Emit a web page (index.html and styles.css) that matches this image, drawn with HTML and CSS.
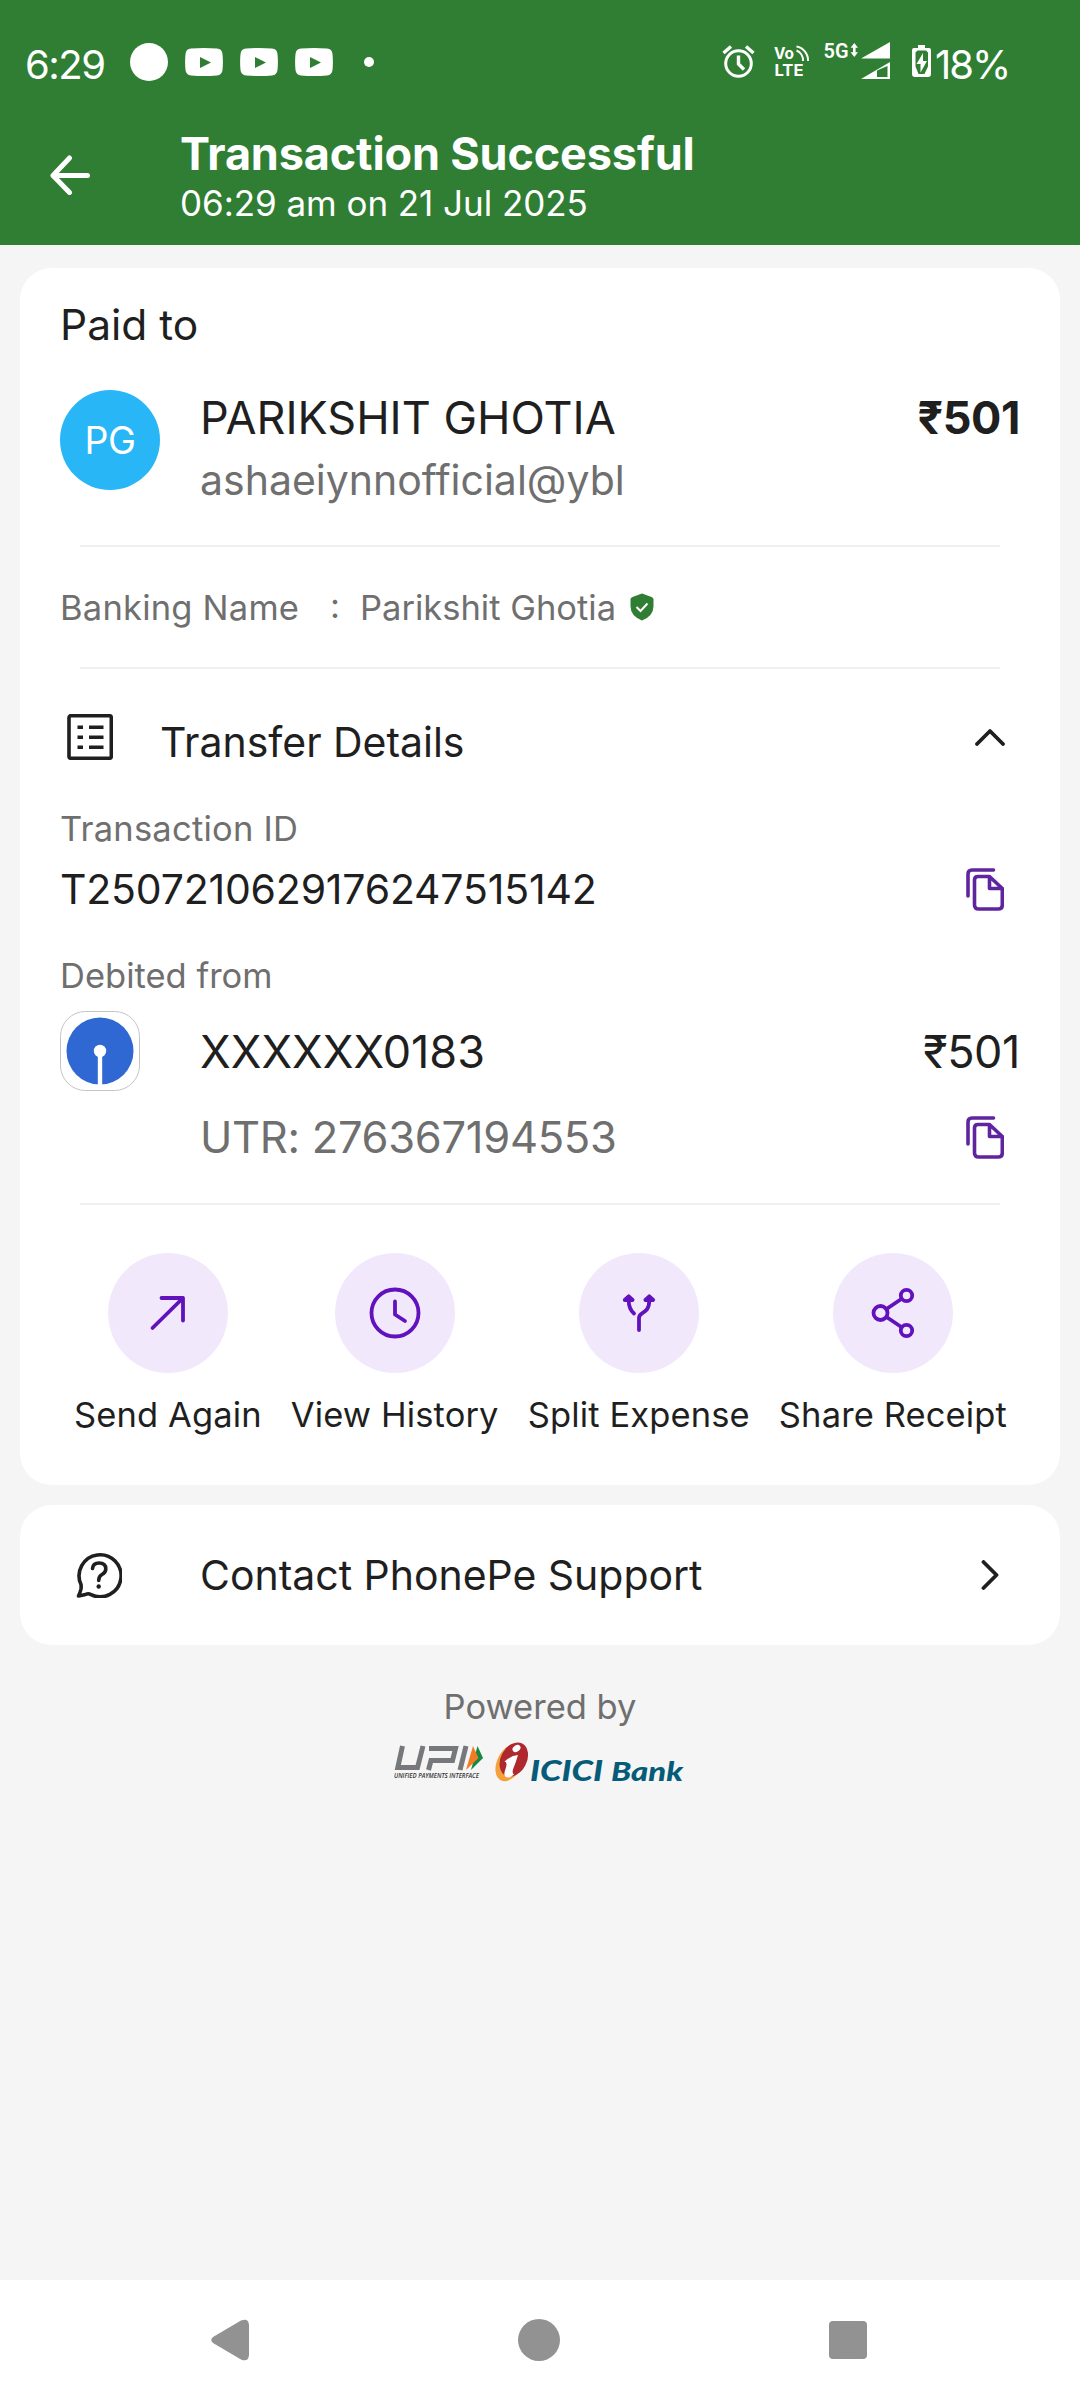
FILE: index.html
```html
<!DOCTYPE html>
<html lang="en">
<head>
<meta charset="utf-8">
<title>Transaction Successful</title>
<link rel="stylesheet" href="styles.css">
</head>
<body>
<header class="top">
  <div class="status">
    <span class="clock">6:29</span>
    <div class="notifications">
      <span class="disc"></span>
      <svg class="video" viewBox="0 0 38 28"><path d="M6 .6Q19-.6 32 .6Q37 1 37.500 6Q38.300 14 37.500 22Q37 27 32 27.400Q19 28.600 6 27.400Q1 27 .5 22Q-.3 14 .5 6Q1 1 6 .6ZM15 9V20L26 14.500Z"/></svg>
      <svg class="video" viewBox="0 0 38 28"><path d="M6 .6Q19-.6 32 .6Q37 1 37.500 6Q38.300 14 37.500 22Q37 27 32 27.400Q19 28.600 6 27.400Q1 27 .5 22Q-.3 14 .5 6Q1 1 6 .6ZM15 9V20L26 14.500Z"/></svg>
      <svg class="video" viewBox="0 0 38 28"><path d="M6 .6Q19-.6 32 .6Q37 1 37.500 6Q38.300 14 37.500 22Q37 27 32 27.400Q19 28.600 6 27.400Q1 27 .5 22Q-.3 14 .5 6Q1 1 6 .6ZM15 9V20L26 14.500Z"/></svg>
    </div>
    <span class="dot"></span>
    <svg class="system" viewBox="0 0 212 44">
      <g fill="none" stroke="#fff" stroke-width="3">
        <circle cx="16.500" cy="23.500" r="12.800"/>
        <path d="M16.500 15.500V24L22 29.500M1.500 13L9 6.500M31.500 13L24 6.500" stroke-width="3.400"/>
        <path d="M74.500 10.500A10.500 10.500 0 0 1 81 21M74.500 6.500A14 14 0 0 1 86 21" stroke-width="2"/>
      </g>
      <g fill="#fff">
        <text class="vo" x="52" y="18.500" textLength="20" lengthAdjust="spacingAndGlyphs">Vo</text>
        <text class="vo" x="52.500" y="36" textLength="29" lengthAdjust="spacingAndGlyphs">LTE</text>
        <text class="net" x="101.500" y="17.500" textLength="25" lengthAdjust="spacingAndGlyphs">5G</text>
        <path d="M132.300 3L136 7.800H133.600V12.200H136L132.300 17L128.600 12.200H131V7.800H128.600Z"/>
        <path d="M139 18.500L168 2V18.500ZM139 39L168 22V39ZM155 30.500V37H165.500V26Z" fill-rule="evenodd"/>
        <path d="M196 5H203V8H207Q209 8 209 10V34Q209 37 206 37H193Q190 37 190 34V10Q190 8 192 8H196ZM193.500 12.500V26.500L196.500 34H202.500L206 26.500V12.500L204 10.500H195.500Z" fill-rule="evenodd"/>
        <path d="M201 13L194.500 24H198.500V32.500L205 21H201Z"/>
      </g>
    </svg>
    <span class="battery">18%</span>
  </div>
  <div class="titlebar">
    <svg class="back" viewBox="0 0 40 40"><path d="M37.500 20.500H3L19.500 3M3 20.500L19.500 37.500"/></svg>
    <div class="heading">
      <h1 class="title">Transaction Successful</h1>
      <div class="when">06:29 am on 21 Jul 2025</div>
    </div>
  </div>
</header>

<main class="content">
  <section class="card receipt">
    <div class="paid">Paid to</div>
    <div class="payee">
      <div class="avatar"><span class="initials">PG</span></div>
      <div class="who">
        <div class="name-line"><span class="name">PARIKSHIT GHOTIA</span><span class="amount strong">₹501</span></div>
        <div class="vpa-line"><span class="vpa">ashaeiynnofficial@ybl</span></div>
      </div>
    </div>
    <div class="rule first"></div>
    <div class="banking">
      <span class="small wide bank-label">Banking Name</span>
      <span class="small colon">:</span>
      <span class="small bank-value">Parikshit Ghotia</span>
      <svg class="shield" viewBox="0 0 24 28"><path class="shield-body" d="M12 .5L21.500 4Q23.500 4.800 23.500 6.500V13Q23.500 23 12 27.500Q.5 23 .5 13V6.500Q.5 4.800 2.500 4Z"/><path class="shield-tick" d="M6.500 14L10.500 18L17.500 10.500"/></svg>
    </div>
    <div class="rule"></div>
    <div class="details-head">
      <svg class="list" viewBox="0 0 46 46"><rect x="2" y="1.700" width="42.300" height="42.600" rx="2"/><path d="M10.500 13.200H16M10.500 23.200H16M10.500 33.200H16M22 13.200H36.500M22 23.200H36.500M22 33.200H36.500"/></svg>
      <span class="medium details-title">Transfer Details</span>
      <svg class="chev-up" viewBox="0 0 30 18"><path d="M2 16L15 3L28 16"/></svg>
    </div>
    <div class="label txn-label"><span class="small wide">Transaction ID</span></div>
    <div class="row txn-row">
      <span class="medium txn-id">T2507210629176247515142</span>
      <svg class="copy" viewBox="0 0 38 43"><path d="M2 28V6Q2 2 6 2H27.500M12 8.500H23.500L36.300 20.500V37Q36.300 41 32.300 41H12.500Q8.500 41 8.500 37V12Q8.500 8.500 12 8.500ZM23.500 8.500V20.500H36.300"/></svg>
    </div>
    <div class="label debit-label"><span class="small">Debited from</span></div>
    <div class="row account">
      <svg class="bank" viewBox="0 0 80 80"><rect class="bank-frame" x=".5" y=".5" width="79" height="79" rx="25"/><circle class="bank-disc" cx="40" cy="40" r="33.500"/><circle cx="40" cy="40" r="6.200" fill="#fff"/><path d="M40 40V75" stroke="#fff" stroke-width="4.400"/></svg>
      <span class="acct">XXXXXX0183</span>
      <span class="amount">₹501</span>
    </div>
    <div class="row utr-row">
      <span class="utr">UTR: 276367194553</span>
      <svg class="copy" viewBox="0 0 38 43"><path d="M2 28V6Q2 2 6 2H27.500M12 8.500H23.500L36.300 20.500V37Q36.300 41 32.300 41H12.500Q8.500 41 8.500 37V12Q8.500 8.500 12 8.500ZM23.500 8.500V20.500H36.300"/></svg>
    </div>
    <div class="rule last"></div>
    <div class="actions">
      <div class="action">
        <svg class="bubble" viewBox="0 0 120 120"><path d="M44.500 75L75 45M53.500 45H75V67.500"/></svg>
        <span class="action-label">Send Again</span>
      </div>
      <div class="action">
        <svg class="bubble" viewBox="0 0 120 120"><circle cx="60" cy="60" r="23.500"/><path d="M60 48.500V61.500L70 68"/></svg>
        <span class="action-label">View History</span>
      </div>
      <div class="action">
        <svg class="bubble" viewBox="0 0 120 120"><path d="M60 77V65C60 58 70.300 62 70.300 47M55 60.500Q49.700 56 49.700 47"/><path class="solid" d="M70.300 43.300L74.200 47H66.400ZM49.700 43.300L53.600 47H45.800Z"/></svg>
        <span class="action-label">Split Expense</span>
      </div>
      <div class="action">
        <svg class="bubble" viewBox="0 0 120 120"><circle cx="47.500" cy="60" r="7"/><circle cx="73.500" cy="42.500" r="5.700"/><circle cx="73.500" cy="77.500" r="5.700"/><path d="M53.500 56L68.700 45.700M53.500 64L68.700 74.300"/></svg>
        <span class="action-label">Share Receipt</span>
      </div>
    </div>
  </section>

  <section class="card support">
    <svg class="help" viewBox="0 0 46 46"><path d="M5 32.500A21 21 0 1 1 15 42.700Q12.500 41 9.500 42.500L2.500 44Q4.500 39.500 5 37Q5.300 34.500 5 32.500Z"/><path d="M16.500 16.500Q17 11 23 11Q29.800 11 29.800 17Q29.800 20.500 26 22.500Q22.700 24.300 22.700 28.500"/><circle class="point" cx="22.700" cy="34.500" r="2.200"/></svg>
    <span class="medium support-text">Contact PhonePe Support</span>
    <svg class="chev-right" viewBox="0 0 18 30"><path d="M2.500 2L15.500 15L2.500 28"/></svg>
  </section>

  <div class="powered">
    <span class="small">Powered by</span>
    <svg class="logos" viewBox="0 0 292 44">
      <g fill="none" stroke="#77787b" stroke-width="5">
        <path d="M8.500 6L3.800 27.500H23.500L29 6"/>
        <path d="M35 8.500H61.500L58.500 20.500H37L34.500 30"/>
        <path d="M72 6L66 30"/>
      </g>
      <path d="M83.500 6L89 18L77 30Z" fill="#128a41"/>
      <path d="M79 6L84.500 18L72 30Z" fill="#f47a24"/>
      <text class="upi-sub" x="0" y="38" textLength="85" lengthAdjust="spacingAndGlyphs">UNIFIED PAYMENTS INTERFACE</text>
      <ellipse cx="115.800" cy="22.500" rx="12.500" ry="20" transform="rotate(27 115.800 22.500)" fill="#f6a03a"/>
      <ellipse cx="119.800" cy="19.500" rx="13" ry="18" transform="rotate(28 119.800 19.500)" fill="#ae282e"/>
      <ellipse cx="122.500" cy="8.500" rx="4.300" ry="3.200" transform="rotate(-35 122.500 8.500)" fill="#fff"/>
      <path d="M110.500 21.500Q117 15.500 124 15Q122 22 119.500 28Q117.500 33 120 34.500Q116 38.500 112 37Q109 35.500 111.500 29Q114 22 110.500 21.500Z" fill="#fff"/>
      <text class="icici" x="136" y="41" textLength="73" lengthAdjust="spacingAndGlyphs">ICICI</text>
      <text class="icici bank-word" x="217" y="41" textLength="72" lengthAdjust="spacingAndGlyphs">Bank</text>
    </svg>
  </div>
</main>

<nav class="nav">
  <svg class="nav-back" viewBox="0 0 38 42"><path d="M2 18L30 1.500Q37.500-1.500 38 6V36Q37.500 43.500 30 40.500L2 24Q-1.500 21 2 18Z"/></svg>
  <span class="nav-home"></span>
  <span class="nav-recent"></span>
</nav>
</body>
</html>
```
FILE: styles.css
```css
* { box-sizing: border-box; }
body {
  margin: 0;
  height: 2400px;
  display: flex;
  flex-direction: column;
  background: #f5f5f5;
  color: #1f1f1f;
  font-family: Inter, "Noto Sans", sans-serif;
  font-size: 34px;
}
svg { display: block; flex: none; }
span { white-space: nowrap; }

/* Header */
.top { height: 245px; background: #2f7e33; color: #fff; }
.status { display: flex; align-items: center; height: 124px; padding-left: 25px; }
.clock, .battery { font-size: 40px; line-height: 40px; padding-top: 5px; }
.clock { width: 105px; letter-spacing: -1.500px; }
.notifications { display: flex; align-items: center; gap: 17px; }
.disc { width: 38px; height: 38px; border-radius: 50%; background: #fff; }
.video { width: 38px; height: 28px; fill: #fff; fill-rule: evenodd; }
.dot { width: 10px; height: 10px; margin-left: 31px; border-radius: 50%; background: #fff; }
.system { width: 212px; height: 44px; margin-left: 348px; }
.vo { font: 700 16px Inter, sans-serif; }
.net { font: 600 20px Roboto, sans-serif; }
.battery { margin-left: 1px; letter-spacing: -2px; }
.titlebar { display: flex; }
.back { width: 40px; height: 40px; margin: 31px 90px 0 50px; fill: none; stroke: #fff; stroke-width: 5; stroke-linecap: round; stroke-linejoin: round; }
.title { margin: 5px 0 0; font-size: 45px; line-height: 50px; font-weight: 700; letter-spacing: -.15px; }
.when { margin-top: 4px; font-size: 35px; line-height: 40px; letter-spacing: -.05px; }

/* Cards */
.content { flex: 1; padding: 23px 20px 0; }
.card { background: #fff; border-radius: 32px; }
.receipt { height: 1217px; padding: 32px 40px 0; }
.paid { font-size: 42.500px; line-height: 49px; }
.payee { display: flex; gap: 40px; margin-top: 41px; }
.avatar { display: flex; align-items: center; justify-content: center; width: 100px; height: 100px; border-radius: 50%; background: #29b6f6; color: #fff; }
.initials { font-size: 37.500px; letter-spacing: -.5px; }
.who { flex: 1; }
.name-line { display: flex; justify-content: space-between; font-size: 45px; line-height: 56px; }
.vpa-line { margin-top: 9px; font-size: 41px; line-height: 50px; color: #6f6f6f; }
.amount { letter-spacing: -.4px; }
.strong { font-weight: 700; }
.rule { height: 2px; margin: 0 20px; background: #efefef; }
.rule.first { margin-top: 40px; }
.rule.last { margin-top: 41px; }
.small { font-size: 34.500px; line-height: 41px; color: #6f6f6f; }
.wide { letter-spacing: .22px; }
.medium { font-size: 41px; line-height: 50px; letter-spacing: -.03px; }
.banking { display: flex; align-items: center; height: 120px; }
.bank-label { width: 270px; }
.colon { width: 30px; padding-bottom: 4px; }
.shield { width: 24px; height: 28px; margin-left: 14px; }
.shield-body { fill: #2f7e33; }
.shield-tick { fill: none; stroke: #fff; stroke-width: 2; }
.details-head { display: flex; align-items: center; height: 56px; margin-top: 40px; padding: 0 15px 0 7px; }
.details-title { flex: 1; padding: 10px 0 0 47px; }
.list { width: 46px; height: 46px; fill: none; stroke: #1f1f1f; stroke-width: 3.600; }
.chev-up { width: 30px; height: 18px; fill: none; stroke: #1f1f1f; stroke-width: 3.800; stroke-linecap: round; stroke-linejoin: round; }
.label { line-height: 41px; display: flex; }
.txn-label { margin-top: 43px; }
.debit-label { margin-top: 41px; }
.row { display: flex; align-items: center; justify-content: space-between; }
.txn-row { height: 50px; margin-top: 15px; padding-right: 16px; }
.txn-id { letter-spacing: -.2px; }
.copy { width: 38px; height: 43px; fill: none; stroke: #5f259f; stroke-width: 3.600; stroke-linejoin: round; stroke-linecap: round; }
.account { height: 80px; margin-top: 15px; font-size: 45px; }
.bank { width: 80px; height: 80px; }
.bank-frame { fill: #fff; stroke: #c4c4c4; }
.bank-disc { fill: #2f67d3; }
.acct { flex: 1; padding-left: 60px; }
.utr-row { height: 50px; margin-top: 21px; padding: 0 16px 0 140px; font-size: 43.500px; letter-spacing: -.3px; color: #6f6f6f; }

/* Actions */
.actions { display: flex; justify-content: space-between; padding: 48px 13px 0 14px; }
.action { display: flex; flex-direction: column; align-items: center; gap: 22px; }
.bubble { width: 120px; height: 120px; border-radius: 50%; background: #f2e8fc; fill: none; stroke: #6112bd; stroke-width: 3.800; stroke-linecap: round; stroke-linejoin: round; }
.solid { fill: #6112bd; }
.action-label { font-size: 34.500px; line-height: 40px; letter-spacing: .12px; }

/* Support and footer */
.support { display: flex; align-items: center; height: 140px; margin-top: 20px; padding: 0 61px 0 56px; }
.help { width: 46px; height: 46px; fill: none; stroke: #1f1f1f; stroke-width: 3.600; stroke-linejoin: round; stroke-linecap: round; }
.point { fill: #1f1f1f; stroke: none; }
.support-text { flex: 1; padding-left: 78px; }
.chev-right { width: 18px; height: 30px; fill: none; stroke: #1f1f1f; stroke-width: 3.800; stroke-linecap: round; stroke-linejoin: round; }
.powered { display: flex; flex-direction: column; align-items: center; padding-top: 41px; }
.logos { width: 292px; height: 44px; margin-top: 13px; }
.upi-sub { font: italic 600 6.200px "Open Sans", sans-serif; fill: #333; }
.icici { font: italic 900 27.500px Lato, sans-serif; fill: #065c78; }
.bank-word { font-size: 26.500px; }

/* System navigation */
.nav { display: flex; justify-content: space-between; align-items: center; height: 120px; padding: 0 213px 0 211px; background: #fff; }
.nav-back { width: 38px; height: 42px; fill: #929292; }
.nav-home { width: 42px; height: 42px; border-radius: 50%; background: #929292; }
.nav-recent { width: 38px; height: 38px; border-radius: 4px; background: #929292; }
```
